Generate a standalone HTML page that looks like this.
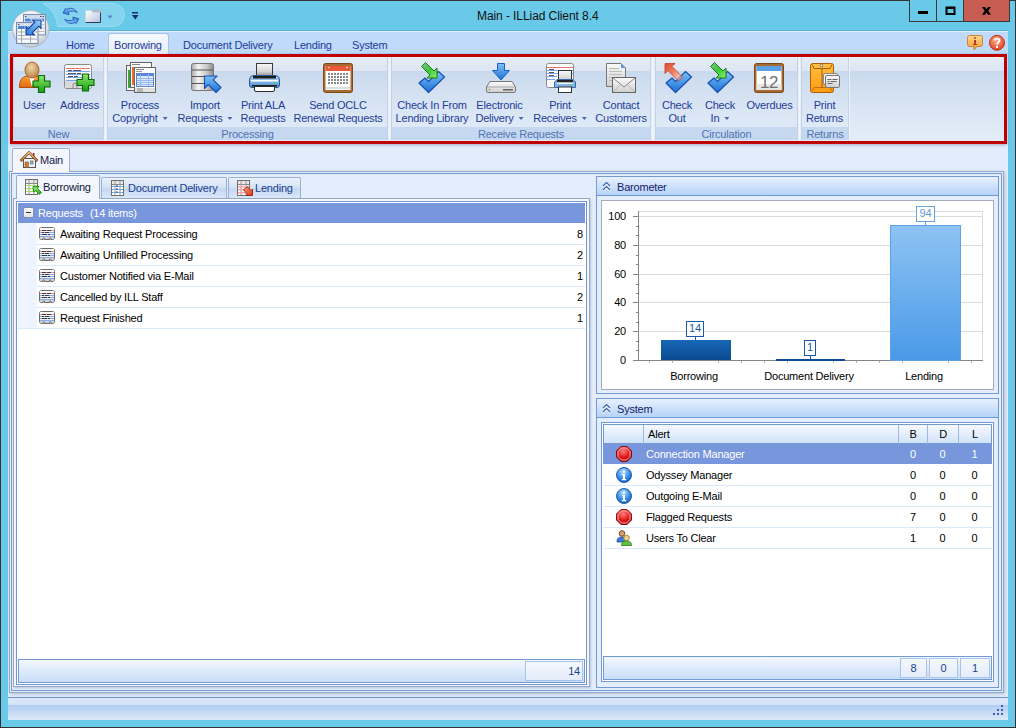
<!DOCTYPE html>
<html><head><meta charset="utf-8">
<style>
*{box-sizing:border-box;}
html,body{margin:0;padding:0;}
body{width:1016px;height:728px;position:relative;overflow:hidden;background:#69c9e8;font-family:"Liberation Sans",sans-serif;font-size:11px;letter-spacing:-0.2px;}
.a{position:absolute;}
.win{left:0;top:0;width:1016px;height:728px;border:1px solid #333;}
/* title bar */
.title{left:477px;top:8px;font-size:12px;letter-spacing:-0.08px;color:#111;line-height:16px;}
.wbtn{top:0;height:22px;border:1px solid #3a3a3a;border-top:none;}
/* ribbon */
.frame{left:8px;top:31px;width:1000px;height:689px;background:#e2ecfa;}
.tabbar{left:8px;top:31px;width:1000px;height:23px;background:#bfdafa;border-top:1px solid #e4f0fd;}
.rtab{top:39px;color:#1e3c98;line-height:13px;}
.ribbon{left:10px;top:54px;width:997px;height:90px;border:3px solid #c00000;box-shadow:0 1px 3px rgba(40,60,100,0.35);background:linear-gradient(#e6edf7 0,#dce5f1 14px,#c9d9ed 14px,#d5e2f2 40px,#e3edf9 83px);}
.grp{top:0;height:83px;border-right:1px solid #c3d2e6;border-left:1px solid #c3d2e6;}
.glab{position:absolute;left:0;right:0;bottom:0;height:13px;background:#c6d8ef;color:#4e74b6;text-align:center;line-height:15px;}
.btn{top:99px;color:#1e3c98;line-height:13px;text-align:center;white-space:nowrap;}
.ico{width:32px;height:32px;top:62px;}
.vals{line-height:13px;color:#000;width:92px;}
.vals b{font-weight:normal;display:inline-block;text-align:center;}
.vals b:nth-child(1){width:28px;}.vals b:nth-child(2){width:31px;}.vals b:nth-child(3){width:33px;}
.dd{display:inline-block;width:5px;height:3px;margin-left:5px;vertical-align:2px;background:#4a6aa8;clip-path:polygon(0 0,100% 0,50% 100%);}
</style></head><body>
<div class="a win"></div>

<!-- title bar elements -->
<div class="a title">Main - ILLiad Client 8.4</div>
<div class="a wbtn" style="left:909px;width:28px;background:#69c9e8;"></div>
<div class="a wbtn" style="left:936px;width:28px;background:#69c9e8;"></div>
<div class="a wbtn" style="left:963px;width:47px;background:#c75c52;"></div>

<!-- frame -->
<div class="a frame"></div>
<div class="a tabbar"></div>
<div class="a" style="left:8px;top:30px;width:1000px;height:1px;background:#5cb2d4;"></div>
<div class="a" style="left:8px;top:53px;width:1000px;height:1px;background:#b0d2f8;"></div>
<div class="a" style="left:108px;top:33px;width:61px;height:22px;border:1px solid #a9c4e8;border-bottom:none;border-radius:3px 3px 0 0;background:linear-gradient(#f6f9fe,#e6eef9);"></div>
<div class="a rtab" style="left:66px;">Home</div>
<div class="a rtab" style="left:114px;">Borrowing</div>
<div class="a rtab" style="left:183px;">Document Delivery</div>
<div class="a rtab" style="left:294px;">Lending</div>
<div class="a rtab" style="left:352px;">System</div>

<!-- title icons -->
<svg class="a" style="left:0;top:0;" width="1016" height="56">
<defs>
  <radialGradient id="gOrb" cx="0.45" cy="0.35" r="0.7"><stop offset="0" stop-color="#ffffff"/><stop offset="0.6" stop-color="#eceff3"/><stop offset="0.9" stop-color="#c4ccd6"/><stop offset="1" stop-color="#9aa6b4"/></radialGradient>
  <linearGradient id="gArr" x1="0" y1="1" x2="1" y2="0"><stop offset="0" stop-color="#2a7ad8"/><stop offset="1" stop-color="#9ccff8"/></linearGradient>
  <linearGradient id="gFold" x1="0" y1="0" x2="1" y2="1"><stop offset="0" stop-color="#ffffff"/><stop offset="1" stop-color="#b9c4dc"/></linearGradient>
  <radialGradient id="gHelp" cx="0.45" cy="0.35" r="0.65"><stop offset="0" stop-color="#ffb090"/><stop offset="1" stop-color="#e0401c"/></radialGradient>
  <linearGradient id="gInfo" x1="0" y1="0" x2="0" y2="1"><stop offset="0" stop-color="#ffd890"/><stop offset="1" stop-color="#f2992a"/></linearGradient>
</defs>
<!-- QAT pill -->
<path d="M43,3.5 L113,3.5 A11.5,11.5 0 0 1 113,26.5 L57.5,26.5 A27,27 0 0 0 43,3.5 Z" fill="#84d3ef" stroke="#9adcf3" stroke-width="1"/>
<!-- refresh -->
<g fill="url(#gArr)" stroke="#1a4fb0" stroke-width="0.8" stroke-linejoin="round">
  <path id="rfa" d="M63,13 L65.7,8.2 L66.8,9.4 C70,7.3 74.5,8 77.2,12.5 C74.5,10.8 71,10.6 68.3,12.3 L69,14.7 Z"/>
  <use href="#rfa" transform="rotate(180 70.9 15.9)"/>
</g>
<!-- folder -->
<defs><linearGradient id="gFold2" x1="0" y1="0" x2="1" y2="1"><stop offset="0" stop-color="#ffffff"/><stop offset="1" stop-color="#b4c0dc"/></linearGradient></defs>
<rect x="92.5" y="9.5" width="8" height="3" fill="#b4b8c0"/>
<path d="M85.5,10.5 L92,10.5 L92,12.5 L100.5,12.5 L100.5,22.5 L85.5,22.5 Z" fill="url(#gFold2)"/>
<path d="M100.5,12.5 L100.5,22.5 L85.5,22.5" fill="none" stroke="#2c3a5c" stroke-width="1"/>
<path d="M85.5,22.5 L85.5,10.5 L92,10.5" fill="none" stroke="#c8d0e0" stroke-width="0.8"/>
<path d="M107.5,15.5 L112.5,15.5 L110,18.5 Z" fill="#5a7cb8"/>
<rect x="132" y="12" width="6" height="1.5" fill="#1a2a6a"/>
<path d="M132,15 L138.5,15 L135.25,19.5 Z" fill="#1a2a6a"/>
<!-- orb -->
<circle cx="30.8" cy="28.9" r="18.3" fill="url(#gOrb)" stroke="#a6b2bf" stroke-width="0.8"/>
<g>
  <rect x="23.5" y="14.5" width="22" height="20.5" fill="#dfe6f0" stroke="#7c8ca4"/>
  <rect x="24" y="15" width="21" height="3" fill="#d0dcf0"/>
  <g fill="#333"><rect x="25" y="16" width="1.5" height="0.8"/><rect x="40" y="16" width="1.5" height="0.8"/><rect x="42.5" y="16" width="1.5" height="0.8"/></g>
  <rect x="25" y="18.5" width="19" height="15" fill="#f6f7f9"/>
  <rect x="25" y="18.5" width="19" height="3" fill="#4a86d8"/>
  <g fill="#a8adb4"><rect x="25" y="24" width="19" height="0.8"/><rect x="25" y="27.5" width="19" height="0.8"/><rect x="25" y="31" width="19" height="0.8"/><rect x="28" y="21" width="0.8" height="13"/><rect x="36" y="21" width="0.8" height="13"/></g>
  <rect x="16.5" y="22.5" width="21.5" height="21" fill="#dfe6f0" stroke="#7c8ca4"/>
  <rect x="17" y="23" width="20.5" height="2.5" fill="#d0dcf0"/>
  <rect x="18" y="24" width="1.5" height="0.8" fill="#333"/>
  <rect x="18" y="26" width="19" height="16.5" fill="#f8f9fb"/>
  <rect x="18" y="26" width="19" height="3" fill="#4a86d8"/>
  <g fill="#a3a8b0"><rect x="18" y="31.5" width="19" height="1"/><rect x="18" y="35" width="19" height="1"/><rect x="18" y="38.5" width="19" height="1"/><rect x="21" y="29" width="1" height="13.5"/><rect x="30" y="36" width="1" height="6.5"/></g>
  <path d="M26,35 L26,26.5 L28.25,28.75 L34.75,22.25 L32.5,20 L41,20 L41,28.5 L38.75,26.25 L32.25,32.75 L34.5,35 Z" fill="url(#gArr)" stroke="#fff" stroke-width="2.4" stroke-linejoin="miter"/>
  <path d="M26,35 L26,26.5 L28.25,28.75 L34.75,22.25 L32.5,20 L41,20 L41,28.5 L38.75,26.25 L32.25,32.75 L34.5,35 Z" fill="url(#gArr)" stroke="#0a3aa0" stroke-width="1.1" stroke-linejoin="miter"/>
</g>
<!-- window buttons glyphs -->
<rect x="918" y="11" width="10" height="3" fill="#000"/>
<rect x="946" y="7" width="10" height="8" fill="none" stroke="#000" stroke-width="0"/>
<path d="M945.5,6.5 h10 v8.5 h-10 Z M947.5,9 v4 h6 v-4 Z" fill="#000" fill-rule="evenodd"/>
<path d="M982,7 L985,7 L986.5,9.2 L988,7 L991,7 L988.3,10.8 L991,14.8 L988,14.8 L986.5,12.5 L985,14.8 L982,14.8 L984.7,10.8 Z" fill="#000"/>
<!-- info -->
<path d="M969.5,35.5 L980.5,35.5 Q982.5,35.5 982.5,37.5 L982.5,44.5 Q982.5,46.5 980.5,46.5 L977,46.5 L974,50 L974,46.5 L969.5,46.5 Q967.5,46.5 967.5,44.5 L967.5,37.5 Q967.5,35.5 969.5,35.5 Z" fill="url(#gInfo)" stroke="#d07a20" stroke-width="0.9"/>
<circle cx="975" cy="38" r="1" fill="#b0401a"/>
<rect x="974" y="40" width="2" height="5" fill="#b0401a"/><rect x="973" y="44" width="4" height="1" fill="#b0401a"/>
<!-- help -->
<circle cx="997" cy="42.8" r="7.5" fill="url(#gHelp)" stroke="#b02a10" stroke-width="0.9"/>
<path d="M994.5,40.5 C994.5,38 999.5,38 999.5,40.5 C999.5,42.5 997,42.5 997,44.8" fill="none" stroke="#fff" stroke-width="1.7"/>
<rect x="996" y="46" width="2" height="2" fill="#fff"/>
</svg>

<!-- ribbon -->
<div class="a ribbon">
  <div class="a grp" style="left:0;width:91px;"><div class="glab">New</div></div>
  <div class="a grp" style="left:94px;width:281px;"><div class="glab">Processing</div></div>
  <div class="a grp" style="left:378px;width:260px;"><div class="glab">Receive Requests</div></div>
  <div class="a grp" style="left:642px;width:143px;"><div class="glab">Circulation</div></div>
  <div class="a grp" style="left:788px;width:48px;"><div class="glab">Returns</div></div>
  <div class="a" style="left:91px;top:0;width:3px;height:83px;background:linear-gradient(90deg,#e2ebf7,#f2f6fc,#e2ebf7);"></div>
  <div class="a" style="left:375px;top:0;width:3px;height:83px;background:linear-gradient(90deg,#e2ebf7,#f2f6fc,#e2ebf7);"></div>
  <div class="a" style="left:638px;top:0;width:4px;height:83px;background:linear-gradient(90deg,#e2ebf7,#f2f6fc,#e2ebf7);"></div>
  <div class="a" style="left:785px;top:0;width:3px;height:83px;background:linear-gradient(90deg,#e2ebf7,#f2f6fc,#e2ebf7);"></div>
  <div class="a" style="left:836px;top:0;width:1px;height:83px;background:#eef3fa;"></div>
</div>

<div class="a btn" style="left:23px;">User</div>
<div class="a btn" style="left:60px;">Address</div>
<div class="a btn" style="left:111px;width:58px;">Process<br>Copyright<span class="dd"></span></div>
<div class="a btn" style="left:177px;width:56px;">Import<br>Requests<span class="dd"></span></div>
<div class="a btn" style="left:240px;width:46px;">Print ALA<br>Requests</div>
<div class="a btn" style="left:292px;width:92px;">Send OCLC<br>Renewal Requests</div>
<div class="a btn" style="left:394px;width:76px;">Check In From<br>Lending Library</div>
<div class="a btn" style="left:474px;width:51px;">Electronic<br>Delivery<span class="dd"></span></div>
<div class="a btn" style="left:532px;width:56px;">Print<br>Receives<span class="dd"></span></div>
<div class="a btn" style="left:594px;width:54px;">Contact<br>Customers</div>
<div class="a btn" style="left:661px;width:32px;">Check<br>Out</div>
<div class="a btn" style="left:704px;width:32px;">Check<br>In<span class="dd"></span></div>
<div class="a btn" style="left:745px;width:49px;">Overdues</div>
<div class="a btn" style="left:804px;width:41px;">Print<br>Returns</div>

<!-- ribbon icons -->
<svg class="a" style="left:0;top:0;" width="1016" height="100">
<defs>
  <linearGradient id="gGreen" x1="0" y1="0" x2="0" y2="1"><stop offset="0" stop-color="#8fe86a"/><stop offset="1" stop-color="#17a00f"/></linearGradient>
  <linearGradient id="gOrange" x1="0" y1="0" x2="0" y2="1"><stop offset="0" stop-color="#ff9d3a"/><stop offset="1" stop-color="#e06a10"/></linearGradient>
  <radialGradient id="gHead" cx="0.45" cy="0.35" r="0.6"><stop offset="0" stop-color="#f0d8a8"/><stop offset="1" stop-color="#c08850"/></radialGradient>
  <linearGradient id="gBlue" x1="0" y1="0" x2="0" y2="1"><stop offset="0" stop-color="#7ec0f8"/><stop offset="1" stop-color="#1a6fd6"/></linearGradient>
  <linearGradient id="gSteel" x1="0" y1="0" x2="1" y2="0"><stop offset="0" stop-color="#a8a8a8"/><stop offset="0.3" stop-color="#f4f4f4"/><stop offset="0.7" stop-color="#c8c8c8"/><stop offset="1" stop-color="#8a8a8a"/></linearGradient>
  <linearGradient id="gGray" x1="0" y1="0" x2="0" y2="1"><stop offset="0" stop-color="#fafafa"/><stop offset="1" stop-color="#cfcfcf"/></linearGradient>
  <linearGradient id="gEnv" x1="0" y1="0" x2="0" y2="1"><stop offset="0" stop-color="#ffc040"/><stop offset="1" stop-color="#ff9a10"/></linearGradient>
  <linearGradient id="gRedA" x1="1" y1="1" x2="0" y2="0"><stop offset="0" stop-color="#ffd0c0" stop-opacity="0.3"/><stop offset="0.5" stop-color="#f48060"/><stop offset="1" stop-color="#e04a30"/></linearGradient>
  <linearGradient id="gGreenA" x1="0" y1="0" x2="1" y2="1"><stop offset="0" stop-color="#1b9b1b" stop-opacity="0.4"/><stop offset="0.5" stop-color="#3cc83c"/><stop offset="1" stop-color="#8ef060"/></linearGradient>
  <g id="plus"><path d="M-3,-8.5h6v5.5h5.5v6h-5.5v5.5h-6v-5.5h-5.5v-6h5.5z" fill="url(#gGreen)" stroke="#0a6a0a" stroke-width="1.2" stroke-linejoin="round"/></g>
  <g id="check"><path d="M0,6 L9.5,15.5 L25.5,0 L25.5,0 L19.5,-5.5 L9.5,4.5 L6,1 Z" fill="url(#gBlue)" stroke="#1450b0" stroke-width="1.2" stroke-linejoin="round"/></g>
</defs>
<!-- User -->
<g>
  <path d="M19.5,87.5 C19.5,80 22,77 27,76 L37,76 C40,77 42,80 42,87.5 Z" fill="url(#gOrange)" stroke="#b04e08" stroke-width="1"/>
  <path d="M29,76 L32,87 L35,76 Z" fill="#fff"/>
  <ellipse cx="32" cy="70" rx="7" ry="8" fill="url(#gHead)" stroke="#a86a38" stroke-width="1"/>
  <use href="#plus" x="41.5" y="84"/>
</g>
<!-- Address -->
<g>
  <rect x="64.5" y="64.5" width="27" height="24" rx="2" fill="#fcfcfc" stroke="#8a8a8a"/>
  <rect x="65" y="81" width="26" height="7" fill="#d8d8d8"/>
  <path d="M73,88 v-3 a2,2 0 0 1 4,0 v3" fill="none" stroke="#8a8a8a"/>
  <rect x="66" y="68" width="24" height="1" fill="#f07070"/>
  <rect x="66" y="71" width="24" height="1" fill="#7aa6f0"/>
  <rect x="66" y="74" width="24" height="1" fill="#7aa6f0"/>
  <rect x="66" y="77" width="24" height="1" fill="#7aa6f0"/>
  <rect x="66" y="80" width="14" height="1" fill="#7aa6f0"/>
  <g fill="#555"><rect x="68" y="70" width="4" height="1"/><rect x="73" y="70" width="8" height="1"/><rect x="68" y="73" width="8" height="1"/><rect x="77" y="73" width="4" height="1"/><rect x="68" y="76" width="5" height="1"/><rect x="74" y="76" width="4" height="1"/></g>
  <use href="#plus" x="85.5" y="82.5"/>
</g>
<!-- Process Copyright -->
<g>
  <rect x="126.5" y="65.5" width="12" height="25" fill="#f4f4f4" stroke="#666"/>
  <rect x="128" y="70" width="2" height="18" fill="#40a040"/>
  <rect x="130.5" y="62.5" width="21" height="25" fill="#f8f8f8" stroke="#666"/>
  <rect x="132" y="67" width="3" height="18" fill="#e87020"/>
  <rect x="132" y="64" width="8" height="1" fill="#888"/>
  <rect x="134.5" y="67.5" width="21" height="25" fill="#ffffff" stroke="#666"/>
  <rect x="136" y="69" width="8" height="1" fill="#888"/><rect x="136" y="71" width="6" height="1" fill="#999"/>
  <rect x="136.5" y="73.5" width="17" height="13" fill="#dce8fb" stroke="#5a86d8"/>
  <rect x="137" y="74" width="16" height="2" fill="#5a86d8"/>
  <g fill="#9ab8ea"><rect x="137" y="78" width="16" height="1"/><rect x="137" y="80" width="16" height="1"/><rect x="137" y="82" width="16" height="1"/><rect x="137" y="84" width="16" height="1"/><rect x="140" y="74" width="1" height="12"/><rect x="148" y="74" width="1" height="12"/></g>
  <rect x="135" y="88" width="20" height="4" fill="#e0e0e0"/>
  <rect x="137" y="88.5" width="6" height="1" fill="#888"/><rect x="137" y="90.5" width="6" height="1" fill="#888"/>
</g>
<!-- Import Requests -->
<g>
  <rect x="191.5" y="63.5" width="22" height="27" rx="2" fill="url(#gSteel)" stroke="#777"/>
  <g fill="#555"><rect x="192" y="69.5" width="21" height="1"/><rect x="192" y="76" width="21" height="1"/><rect x="192" y="83" width="21" height="1"/></g>
  <path d="M204.5,76 L217,76 L213.2,79.8 L221,87.5 L216,92.5 L208.3,84.7 L204.5,88.5 Z" fill="url(#gBlue)" stroke="#1450b0" stroke-width="1.1" stroke-linejoin="round"/>
</g>
<!-- Print ALA -->
<g>
  <defs>
    <linearGradient id="gPap" x1="0" y1="0" x2="0" y2="1"><stop offset="0" stop-color="#f8f8f8"/><stop offset="0.6" stop-color="#d8d8d8"/><stop offset="1" stop-color="#8a8a8a"/></linearGradient>
    <linearGradient id="gPb" x1="0" y1="0" x2="0" y2="1"><stop offset="0" stop-color="#b8daf8"/><stop offset="1" stop-color="#4a8ed8"/></linearGradient>
  </defs>
  <rect x="256.5" y="63.5" width="16" height="13" fill="url(#gPap)" stroke="#3a3a3a"/>
  <path d="M253,75.5 L276,75.5 Q279.5,76 279.5,80 L279.5,85 Q279.5,87.5 277,87.5 L252,87.5 Q249.5,87.5 249.5,85 L249.5,80 Q249.5,76 253,75.5 Z" fill="url(#gPb)" stroke="#2a5a9a"/>
  <rect x="253" y="76" width="23" height="2.5" fill="#1e1e1e"/>
  <rect x="251" y="80" width="27" height="1.5" fill="#ffffff"/>
  <rect x="252" y="85" width="25" height="1.5" fill="#1e1e1e"/>
  <path d="M254.5,86.5 L274.5,86.5 L274.5,90 Q274.5,91.5 273,91.5 L256,91.5 Q254.5,91.5 254.5,90 Z" fill="#fff" stroke="#2a2a2a"/>
  <circle cx="274.5" cy="83" r="0.9" fill="#40d040"/>
</g>
<!-- Send OCLC -->
<g>
  <rect x="323.5" y="63.5" width="29" height="29" rx="2" fill="#a86a30" stroke="#7a4a1a"/>
  <rect x="325.5" y="66" width="25" height="24" fill="#fff"/>
  <rect x="325.5" y="66" width="25" height="5" fill="#e95a3a"/>
  <circle cx="329" cy="67.5" r="0.8" fill="#fff"/><circle cx="347" cy="67.5" r="0.8" fill="#fff"/>
  <g fill="#8a8a8a">
    <rect x="328" y="73" width="2" height="2"/><rect x="331" y="73" width="2" height="2"/><rect x="334" y="73" width="2" height="2"/><rect x="337" y="73" width="2" height="2"/><rect x="340" y="73" width="2" height="2"/><rect x="343" y="73" width="2" height="2"/><rect x="346" y="73" width="2" height="2"/>
    <rect x="328" y="76" width="2" height="2"/><rect x="331" y="76" width="2" height="2"/><rect x="334" y="76" width="2" height="2"/><rect x="337" y="76" width="2" height="2"/><rect x="340" y="76" width="2" height="2"/><rect x="343" y="76" width="2" height="2"/><rect x="346" y="76" width="2" height="2"/>
    <rect x="328" y="79" width="2" height="2"/><rect x="331" y="79" width="2" height="2"/><rect x="334" y="79" width="2" height="2"/><rect x="337" y="79" width="2" height="2"/><rect x="340" y="79" width="2" height="2"/><rect x="343" y="79" width="2" height="2"/><rect x="346" y="79" width="2" height="2"/>
    <rect x="328" y="82" width="2" height="2"/><rect x="331" y="82" width="2" height="2"/><rect x="334" y="82" width="2" height="2"/><rect x="337" y="82" width="2" height="2"/><rect x="340" y="82" width="2" height="2"/><rect x="343" y="82" width="2" height="2"/><rect x="346" y="82" width="2" height="2"/>
  </g>
  <rect x="326" y="87" width="24" height="2" fill="#ddd"/>
</g>
<!-- Check In From -->
<g>
  <use href="#check" x="419" y="77"/>
  <path d="M437,78 L427,78 L430,75 L421.5,66.5 L425.5,62.5 L434,71 L437,68 Z" fill="url(#gGreenA)" stroke="#18801a" stroke-width="1" stroke-linejoin="round"/>
</g>
<!-- Electronic Delivery -->
<g>
  <path d="M497.5,63.5 L504.5,63.5 L504.5,70.5 L509.5,70.5 L501,80 L492.5,70.5 L497.5,70.5 Z" fill="url(#gBlue)" stroke="#1a60c0" stroke-width="1" stroke-linejoin="round"/>
  <path d="M490,81.5 L512,81.5 L515.5,87 L515.5,91 Q515.5,92.5 514,92.5 L488,92.5 Q486.5,92.5 486.5,91 L486.5,87 Z" fill="url(#gGray)" stroke="#777"/>
  <rect x="487" y="86.5" width="28" height="1" fill="#aaa"/>
  <circle cx="489.5" cy="89.5" r="0.8" fill="#40c040"/>
  <rect x="503" y="89" width="10" height="1.5" fill="#666"/>
</g>
<!-- Print Receives -->
<g>
  <rect x="546.5" y="63.5" width="27" height="24" rx="2" fill="#fcfcfc" stroke="#8a8a8a"/>
  <rect x="547" y="67" width="26" height="1" fill="#f07070"/>
  <g fill="#7aa6f0"><rect x="547" y="70" width="26" height="1"/><rect x="547" y="73" width="26" height="1"/><rect x="547" y="76" width="10" height="1"/><rect x="547" y="79" width="8" height="1"/></g>
  <g fill="#555"><rect x="549" y="69" width="5" height="1"/><rect x="549" y="72" width="5" height="1"/><rect x="549" y="75" width="5" height="1"/></g>
  <rect x="558.5" y="70.5" width="13" height="9" fill="url(#gGray)" stroke="#333"/>
  <path d="M557,79.5 L573,79.5 L575.5,82 L575.5,87.5 L554.5,87.5 L554.5,82 Z" fill="#7fb4ea" stroke="#3a6aaa"/>
  <rect x="557" y="80" width="16" height="2.5" fill="#222"/>
  <rect x="557" y="82.5" width="16" height="1.5" fill="#fff"/>
  <rect x="558.5" y="87" width="13" height="5.5" fill="#fff" stroke="#333"/>
  <circle cx="572" cy="85" r="0.8" fill="#40d040"/>
</g>
<!-- Contact Customers -->
<g>
  <path d="M606.5,63.5 L621,63.5 L625.5,68 L625.5,86.5 L606.5,86.5 Z" fill="url(#gGray)" stroke="#777"/>
  <path d="M621,63.5 L625.5,68 L621,68 Z" fill="#5a9ae8"/>
  <g fill="#bbb"><rect x="609" y="68" width="10" height="1"/><rect x="609" y="71" width="13" height="1"/><rect x="609" y="74" width="13" height="1"/><rect x="609" y="77" width="4" height="1"/><rect x="609" y="80" width="4" height="1"/></g>
  <rect x="612.5" y="77.5" width="23" height="15" fill="url(#gGray)" stroke="#666"/>
  <path d="M613,78 L624,87 L635,78" fill="none" stroke="#888"/>
  <path d="M613,92 L620,85 M635,92 L628,85" fill="none" stroke="#bbb"/>
</g>
<!-- Check Out -->
<g>
  <use href="#check" x="666" y="77"/>
  <path d="M665,63.5 L675,63.5 L672,66.5 L682.5,77 L678.5,81 L668,70.5 L665,73.5 Z" fill="url(#gRedA)" stroke="#c84a30" stroke-width="0.9" stroke-linejoin="round"/>
</g>
<!-- Check In -->
<g>
  <use href="#check" x="708" y="77"/>
  <path d="M726,78 L716,78 L719,75 L710.5,66.5 L714.5,62.5 L723,71 L726,68 Z" fill="url(#gGreenA)" stroke="#18801a" stroke-width="1" stroke-linejoin="round"/>
</g>
<!-- Overdues -->
<g>
  <rect x="754.5" y="63.5" width="29" height="29" rx="2" fill="#a86a30" stroke="#7a4a1a"/>
  <rect x="756.5" y="66" width="25" height="24" fill="#fff"/>
  <rect x="756.5" y="66" width="25" height="5" fill="#5aa0e8"/>
  <rect x="756.5" y="84" width="25" height="6" fill="#e6e6e6"/>
  <text x="769" y="88" text-anchor="middle" font-family="Liberation Sans" font-size="17" fill="#707070" letter-spacing="-0.5">12</text>
</g>
<!-- Print Returns -->
<g>
  <rect x="810.5" y="63.5" width="23" height="29" rx="2" fill="url(#gEnv)" stroke="#b0600a"/>
  <path d="M812,64.5 L814,68.5 L830,68.5 L832,64.5" fill="none" stroke="#a05a10"/>
  <path d="M812,91 L814,87.5 L830,87.5 L832,91" fill="none" stroke="#c87010"/>
  <rect x="821.5" y="68" width="1" height="20" fill="#a05a10"/>
  <circle cx="821.5" cy="65.5" r="1.3" fill="#fff" stroke="#333" stroke-width="0.6"/>
  <rect x="823.5" y="73.5" width="14" height="11" rx="1.5" fill="#f4f4f4" stroke="#888"/>
  <rect x="825.5" y="75.5" width="14" height="12" rx="1.5" fill="url(#gGray)" stroke="#777"/>
  <g fill="#666"><rect x="827.5" y="79" width="4" height="1"/><rect x="832.5" y="79" width="5" height="1"/><rect x="827.5" y="81" width="2" height="1"/><rect x="830.5" y="81" width="6" height="1"/><rect x="827.5" y="83" width="5" height="1"/></g>
</g>
</svg>

<!-- main doc tab -->
<div class="a" style="left:9px;top:171px;width:995px;height:522px;border:1px solid #94a7c6;box-shadow:1px 1px 3px rgba(60,80,120,0.3);"></div>
<div class="a" style="left:12px;top:148px;width:58px;height:24px;border:1px solid #9db2d3;border-bottom:none;border-radius:2px 2px 0 0;background:#f3f7fd;"></div>
<div class="a" style="left:40px;top:154px;color:#15204a;font-size:11px;line-height:13px;">Main</div>
<div class="a" style="left:11px;top:173px;width:991px;height:518px;border:1px solid #739ad3;background:#e3edfb;"></div>

<!-- left tab control -->
<div class="a" style="left:13px;top:198px;width:577px;height:489px;border:1px solid #94a7c6;box-shadow:1px 1px 2px rgba(60,80,120,0.25);background:#f3f7fd;"></div>
<div class="a" style="left:16px;top:175px;width:84px;height:24px;border:1px solid #98acc9;border-bottom:none;border-radius:2px 2px 0 0;background:#f3f7fd;"></div>
<div class="a" style="left:101px;top:177px;width:126px;height:21px;border:1px solid #97b0d4;border-bottom:none;border-radius:2px 2px 0 0;background:linear-gradient(#eaf1fb,#d6e4f6 45%,#c5d8f2 55%,#dae7f8);"></div>
<div class="a" style="left:228px;top:177px;width:73px;height:21px;border:1px solid #97b0d4;border-bottom:none;border-radius:2px 2px 0 0;background:linear-gradient(#eaf1fb,#d6e4f6 45%,#c5d8f2 55%,#dae7f8);"></div>
<div class="a" style="left:43px;top:181px;color:#10183a;line-height:13px;">Borrowing</div>
<div class="a" style="left:128px;top:182px;color:#20408f;line-height:13px;">Document Delivery</div>
<div class="a" style="left:255px;top:182px;color:#20408f;line-height:13px;">Lending</div>

<!-- left grid -->
<div class="a" style="left:16px;top:201px;width:571px;height:484px;border:1px solid #6f98d3;background:#fff;"></div>
<div class="a" style="left:18px;top:203px;width:567px;height:20px;background:#7896dc;"></div>
<div class="a" style="left:23px;top:207px;width:11px;height:11px;border:1px solid #8090a8;border-radius:2px;background:linear-gradient(#ffffff,#dfe5ee);"></div>
<div class="a" style="left:26px;top:212px;width:5px;height:1px;background:#333;"></div>
<div class="a" style="left:38px;top:207px;color:#fff;line-height:13px;">Requests<span style="margin-left:7px">(14 items)</span></div>
<div class="a" style="left:18px;top:223px;width:19px;height:105px;background:#edf4fe;"></div>
<div class="a" style="left:37px;top:244px;width:548px;height:1px;background:#d9e8fb;"></div>
<div class="a" style="left:37px;top:265px;width:548px;height:1px;background:#d9e8fb;"></div>
<div class="a" style="left:37px;top:286px;width:548px;height:1px;background:#d9e8fb;"></div>
<div class="a" style="left:37px;top:307px;width:548px;height:1px;background:#d9e8fb;"></div>
<div class="a" style="left:18px;top:328px;width:567px;height:1px;background:#d9e8fb;"></div>
<div class="a" style="left:60px;top:228px;color:#000;line-height:13px;">Awaiting Request Processing</div>
<div class="a" style="left:60px;top:249px;color:#000;line-height:13px;">Awaiting Unfilled Processing</div>
<div class="a" style="left:60px;top:270px;color:#000;line-height:13px;">Customer Notified via E-Mail</div>
<div class="a" style="left:60px;top:291px;color:#000;line-height:13px;">Cancelled by ILL Staff</div>
<div class="a" style="left:60px;top:312px;color:#000;line-height:13px;">Request Finished</div>
<div class="a" style="left:540px;top:228px;width:43px;text-align:right;color:#000;line-height:13px;">8</div>
<div class="a" style="left:540px;top:249px;width:43px;text-align:right;color:#000;line-height:13px;">2</div>
<div class="a" style="left:540px;top:270px;width:43px;text-align:right;color:#000;line-height:13px;">1</div>
<div class="a" style="left:540px;top:291px;width:43px;text-align:right;color:#000;line-height:13px;">2</div>
<div class="a" style="left:540px;top:312px;width:43px;text-align:right;color:#000;line-height:13px;">1</div>
<div class="a" style="left:18px;top:659px;width:567px;height:24px;border:1px solid #739ad3;background:linear-gradient(#f3f7fe,#c9ddf8);"></div>
<div class="a" style="left:525px;top:661px;width:58px;height:20px;border:1px solid #a9c3ea;background:linear-gradient(#f5f9fe,#e3ecfa);"></div>
<div class="a" style="left:540px;top:665px;width:40px;text-align:right;color:#1f3f8f;line-height:13px;">14</div>

<!-- barometer panel -->
<div class="a" style="left:596px;top:176px;width:403px;height:218px;border:1px solid #739ad3;background:#e3edfb;"></div>
<div class="a" style="left:597px;top:177px;width:401px;height:19px;background:linear-gradient(#e8f1fd,#b4d3fa);border-bottom:1px solid #739ad3;"></div>
<div class="a" style="left:617px;top:181px;color:#15206a;line-height:13px;">Barometer</div>
<div class="a" style="left:601px;top:200px;width:393px;height:190px;border:1px solid #a3acb8;background:#fff;"></div>
<svg class="a" style="left:0;top:0;" width="1016" height="400" shape-rendering="crispEdges">
  <defs>
    <linearGradient id="gb" x1="0" y1="0" x2="0" y2="1"><stop offset="0" stop-color="#1767b8"/><stop offset="1" stop-color="#0a4990"/></linearGradient>
    <linearGradient id="gl" x1="0" y1="0" x2="0" y2="1"><stop offset="0" stop-color="#8ec3f3"/><stop offset="1" stop-color="#4a9ae8"/></linearGradient>
  </defs>
  <g fill="#dcdcdc">
    <rect x="639" y="211" width="344" height="1"/>
    <rect x="982" y="211" width="1" height="149"/>
    <rect x="639" y="216" width="343" height="1"/>
    <rect x="639" y="245" width="343" height="1"/>
    <rect x="639" y="274" width="343" height="1"/>
    <rect x="639" y="302" width="343" height="1"/>
    <rect x="639" y="331" width="343" height="1"/>
  </g>
  <g fill="#858585">
    <rect x="638" y="211" width="1" height="150"/>
    <rect x="633" y="360" width="350" height="1"/>
    <rect x="633" y="216" width="5" height="1"/>
    <rect x="633" y="245" width="5" height="1"/>
    <rect x="633" y="274" width="5" height="1"/>
    <rect x="633" y="302" width="5" height="1"/>
    <rect x="633" y="331" width="5" height="1"/>
    <rect x="636" y="226" width="2" height="1"/><rect x="636" y="235" width="2" height="1"/>
    <rect x="636" y="255" width="2" height="1"/><rect x="636" y="264" width="2" height="1"/>
    <rect x="636" y="284" width="2" height="1"/><rect x="636" y="293" width="2" height="1"/>
    <rect x="636" y="312" width="2" height="1"/><rect x="636" y="322" width="2" height="1"/>
    <rect x="636" y="341" width="2" height="1"/><rect x="636" y="350" width="2" height="1"/>
  </g>
  <g fill="#b0b0b0">
    <rect x="649" y="361" width="1" height="2"/><rect x="672" y="361" width="1" height="2"/>
    <rect x="718" y="361" width="1" height="2"/><rect x="741" y="361" width="1" height="2"/>
    <rect x="764" y="361" width="1" height="2"/><rect x="787" y="361" width="1" height="2"/>
    <rect x="833" y="361" width="1" height="2"/><rect x="856" y="361" width="1" height="2"/>
    <rect x="879" y="361" width="1" height="2"/><rect x="902" y="361" width="1" height="2"/>
    <rect x="948" y="361" width="1" height="2"/><rect x="971" y="361" width="1" height="2"/>
  </g>
  <rect x="661" y="340" width="70" height="20" fill="url(#gb)"/>
  <rect x="776" y="359" width="69" height="2" fill="#0b4c95"/>
  <rect x="890" y="225" width="70" height="135" fill="url(#gl)" stroke="#5fa2e6" stroke-width="1"/>
  <g fill="#fff" stroke="#1a5aa8">
    <rect x="686.5" y="321.5" width="17" height="15"/>
    <rect x="804.5" y="340.5" width="11" height="15"/>
  </g>
  <rect x="916.5" y="206.5" width="18" height="15" fill="#fff" stroke="#6aa5e2"/>
  <rect x="695" y="337" width="1" height="3" fill="#1a5aa8"/>
  <rect x="810" y="356" width="1" height="3" fill="#1a5aa8"/>
  <rect x="925" y="222" width="1" height="3" fill="#6aa5e2"/>
</svg>
<div class="a" style="left:600px;top:210px;width:26px;text-align:right;color:#000;line-height:13px;">100</div>
<div class="a" style="left:600px;top:239px;width:26px;text-align:right;color:#000;line-height:13px;">80</div>
<div class="a" style="left:600px;top:268px;width:26px;text-align:right;color:#000;line-height:13px;">60</div>
<div class="a" style="left:600px;top:296px;width:26px;text-align:right;color:#000;line-height:13px;">40</div>
<div class="a" style="left:600px;top:325px;width:26px;text-align:right;color:#000;line-height:13px;">20</div>
<div class="a" style="left:600px;top:354px;width:26px;text-align:right;color:#000;line-height:13px;">0</div>
<div class="a" style="left:686px;top:322px;width:18px;text-align:center;color:#1a5aa8;line-height:13px;">14</div>
<div class="a" style="left:804px;top:341px;width:12px;text-align:center;color:#1a5aa8;line-height:13px;">1</div>
<div class="a" style="left:916px;top:207px;width:19px;text-align:center;color:#5f97d6;line-height:13px;">94</div>
<div class="a" style="left:644px;top:370px;width:100px;text-align:center;color:#000;line-height:13px;">Borrowing</div>
<div class="a" style="left:759px;top:370px;width:100px;text-align:center;color:#000;line-height:13px;">Document Delivery</div>
<div class="a" style="left:874px;top:370px;width:100px;text-align:center;color:#000;line-height:13px;">Lending</div>

<!-- system panel -->
<div class="a" style="left:596px;top:398px;width:403px;height:290px;border:1px solid #739ad3;background:#e3edfb;"></div>
<div class="a" style="left:597px;top:399px;width:401px;height:19px;background:linear-gradient(#e8f1fd,#b4d3fa);border-bottom:1px solid #739ad3;"></div>
<div class="a" style="left:617px;top:403px;color:#15206a;line-height:13px;">System</div>
<div class="a" style="left:601px;top:422px;width:393px;height:260px;border:1px solid #739ad3;background:#fff;"></div>
<div class="a" style="left:603px;top:424px;width:389px;height:20px;background:linear-gradient(#f6f9fe,#d0e2fa);border:1px solid #739ad3;"></div>
<div class="a" style="left:603px;top:444px;width:389px;height:20px;background:#7896dc;"></div>
<div class="a" style="left:603px;top:656px;width:389px;height:24px;border:1px solid #739ad3;background:linear-gradient(#f3f7fe,#c9ddf8);"></div>
<div class="a" style="left:643px;top:425px;width:1px;height:19px;background:#9cb9e0;"></div>
<div class="a" style="left:898px;top:425px;width:1px;height:19px;background:#9cb9e0;"></div>
<div class="a" style="left:927px;top:425px;width:1px;height:19px;background:#9cb9e0;"></div>
<div class="a" style="left:958px;top:425px;width:1px;height:19px;background:#9cb9e0;"></div>
<div class="a" style="left:648px;top:428px;color:#000;line-height:13px;">Alert</div>
<div class="a" style="left:899px;top:428px;width:28px;text-align:center;color:#000;line-height:13px;">B</div>
<div class="a" style="left:928px;top:428px;width:30px;text-align:center;color:#000;line-height:13px;">D</div>
<div class="a" style="left:959px;top:428px;width:32px;text-align:center;color:#000;line-height:13px;">L</div>
<div class="a" style="left:603px;top:485px;width:389px;height:1px;background:#d9e8fb;"></div>
<div class="a" style="left:603px;top:506px;width:389px;height:1px;background:#d9e8fb;"></div>
<div class="a" style="left:603px;top:527px;width:389px;height:1px;background:#d9e8fb;"></div>
<div class="a" style="left:603px;top:548px;width:389px;height:1px;background:#d9e8fb;"></div>
<div class="a" style="left:646px;top:448px;color:#fff;line-height:13px;">Connection Manager</div>
<div class="a" style="left:646px;top:469px;color:#000;line-height:13px;">Odyssey Manager</div>
<div class="a" style="left:646px;top:490px;color:#000;line-height:13px;">Outgoing E-Mail</div>
<div class="a" style="left:646px;top:511px;color:#000;line-height:13px;">Flagged Requests</div>
<div class="a" style="left:646px;top:532px;color:#000;line-height:13px;">Users To Clear</div>
<div class="a vals" style="left:899px;top:448px;color:#fff;"><b>0</b><b>0</b><b>1</b></div>
<div class="a vals" style="left:899px;top:469px;"><b>0</b><b>0</b><b>0</b></div>
<div class="a vals" style="left:899px;top:490px;"><b>0</b><b>0</b><b>0</b></div>
<div class="a vals" style="left:899px;top:511px;"><b>7</b><b>0</b><b>0</b></div>
<div class="a vals" style="left:899px;top:532px;"><b>1</b><b>0</b><b>0</b></div>
<div class="a" style="left:900px;top:658px;width:27px;height:20px;border:1px solid #a9c3ea;background:linear-gradient(#f5f9fe,#e3ecfa);text-align:center;line-height:18px;color:#1f3f8f;">8</div>
<div class="a" style="left:929px;top:658px;width:29px;height:20px;border:1px solid #a9c3ea;background:linear-gradient(#f5f9fe,#e3ecfa);text-align:center;line-height:18px;color:#1f3f8f;">0</div>
<div class="a" style="left:960px;top:658px;width:30px;height:20px;border:1px solid #a9c3ea;background:linear-gradient(#f5f9fe,#e3ecfa);text-align:center;line-height:18px;color:#1f3f8f;">1</div>

<!-- status bar -->
<div class="a" style="left:8px;top:697px;width:1000px;height:23px;border-top:1px solid #6d93cc;background:linear-gradient(#dce8f8 0,#d3e2f7 7px,#b0ccf1 7px,#c6daf4 14px,#dae7f8 22px);"></div>

<!-- misc icons -->
<svg class="a" style="left:0;top:0;" width="1016" height="728">
<defs>
  <linearGradient id="gRoof" x1="0" y1="0" x2="0" y2="1"><stop offset="0" stop-color="#f0c890"/><stop offset="1" stop-color="#b8783a"/></linearGradient>
  <radialGradient id="gStop" cx="0.45" cy="0.3" r="0.7"><stop offset="0" stop-color="#ff8080"/><stop offset="0.6" stop-color="#e01818"/><stop offset="1" stop-color="#a00000"/></radialGradient>
  <radialGradient id="gInf" cx="0.45" cy="0.3" r="0.7"><stop offset="0" stop-color="#b8e0ff"/><stop offset="0.6" stop-color="#3a90e8"/><stop offset="1" stop-color="#1860c0"/></radialGradient>
  <linearGradient id="gGA" x1="0" y1="0" x2="1" y2="1"><stop offset="0" stop-color="#a8f080"/><stop offset="1" stop-color="#20a020"/></linearGradient>
  <linearGradient id="gRA" x1="0" y1="0" x2="1" y2="1"><stop offset="0" stop-color="#ffa080"/><stop offset="1" stop-color="#d83818"/></linearGradient>
  <g id="rowico">
    <rect x="0.5" y="0.5" width="15" height="12" rx="2" fill="#e6e6e6" stroke="#6a6a6a"/>
    <rect x="1" y="1" width="14" height="2" fill="#fafafa"/>
    <rect x="1" y="3" width="14" height="1" fill="#ff8c8c"/>
    <rect x="1" y="4" width="14" height="1" fill="#f4f4f4"/>
    <rect x="1" y="5" width="14" height="1" fill="#86acf6"/>
    <rect x="1" y="6" width="14" height="1" fill="#f0f0f0"/>
    <rect x="1" y="7" width="14" height="1" fill="#86acf6"/>
    <rect x="1" y="8" width="14" height="1" fill="#ececec"/>
    <rect x="1" y="9" width="14" height="1" fill="#86acf6"/>
    <rect x="1" y="10" width="14" height="2" fill="#cfcfcf"/>
    <g fill="#3a3a3a"><rect x="3" y="3" width="4" height="1"/><rect x="8" y="3" width="4" height="1"/><rect x="3" y="5" width="2" height="1"/><rect x="6" y="5" width="4" height="1"/><rect x="3" y="7" width="5" height="1"/><rect x="9" y="7" width="2" height="1"/></g>
    <path d="M4,12.5 v-1.5 h1.5 v1.5 M10.5,12.5 v-1.5 h1.5 v1.5" fill="#fff" stroke="#6a6a6a" stroke-width="0.8"/>
  </g>
  <g id="stop"><path d="M5,0.5 L11,0.5 L15.5,5 L15.5,11 L11,15.5 L5,15.5 L0.5,11 L0.5,5 Z" fill="url(#gStop)" stroke="#8a0000" stroke-width="0.9"/><path d="M5.5,2 L10.5,2 L14,5.5 L14,10.5 L10.5,14 L5.5,14 L2,10.5 L2,5.5 Z" fill="none" stroke="#ffc8c8" stroke-width="0.9" opacity="1"/></g>
  <g id="info"><circle cx="8" cy="8" r="7.5" fill="url(#gInf)" stroke="#1a50a0" stroke-width="0.9"/><circle cx="8" cy="4.5" r="1.3" fill="#fff"/><path d="M6,7 h3 v5 h1.2 v1.3 h-4.4 v-1.3 h1.2 v-3.7 h-1 z" fill="#fff"/></g>
  <g id="chev"><path d="M0.5,5 L4,1.5 L7.5,5 M0.5,9 L4,5.5 L7.5,9" fill="none" stroke="#ffffff" stroke-width="1.3" transform="translate(0,1)"/><path d="M0.5,5 L4,1.5 L7.5,5 M0.5,9 L4,5.5 L7.5,9" fill="none" stroke="#3a62a6" stroke-width="1.1"/></g>
  <g id="grid13">
    <rect x="0.5" y="0.5" width="12" height="15" fill="#fff" stroke="#707070"/>
    <rect x="1" y="1" width="11" height="3" fill="#e8e8e8"/>
    <rect x="1" y="4" width="11" height="1" fill="#888"/>
    <rect x="3.5" y="1" width="1" height="14" fill="#999"/><rect x="8.5" y="1" width="1" height="14" fill="#999"/>
  </g>
</defs>
<!-- house -->
<g>
  <rect x="23.5" y="158.5" width="12" height="9" fill="#f2f2f2" stroke="#555"/>
  <rect x="33" y="153" width="1.5" height="5" fill="#c01818"/>
  <path d="M20.5,161 L29,152.5 L37.5,161" fill="none" stroke="#7a4a1a" stroke-width="2.6" stroke-linejoin="round"/>
  <path d="M20.5,161 L29,152.5 L37.5,161" fill="none" stroke="url(#gRoof)" stroke-width="1.4" stroke-linejoin="round"/>
  <rect x="25" y="162" width="3.5" height="5.5" fill="#c8803a" stroke="#7a4a1a" stroke-width="0.5"/>
  <rect x="30.5" y="161" width="2.5" height="3" fill="#8ac8f8" stroke="#555" stroke-width="0.6"/>
</g>
<!-- borrowing tab icon -->
<g transform="translate(25,179)">
  <use href="#grid13"/>
  <rect x="1" y="6" width="11" height="1" fill="#a0e060"/><rect x="1" y="9" width="11" height="1" fill="#a0e060"/><rect x="1" y="12" width="11" height="1" fill="#a0e060"/>
  <path d="M8,7.5 L14,7.5 L12.5,9.5 L16.5,13.5 L14.5,15.5 L10.5,11.5 L8.5,13 Z" fill="url(#gGA)" stroke="#168a16" stroke-width="0.9" stroke-linejoin="round"/>
</g>
<!-- doc delivery tab icon -->
<g transform="translate(111,180)">
  <use href="#grid13"/>
  <rect x="1" y="6" width="11" height="1" fill="#7aa8e0"/><rect x="1" y="9" width="11" height="1" fill="#7aa8e0"/><rect x="1" y="12" width="11" height="1" fill="#7aa8e0"/>
  <g fill="#2a5a9a"><rect x="5" y="5.5" width="2" height="1.2"/><rect x="5" y="8.5" width="2" height="1.2"/><rect x="5" y="11.5" width="2" height="1.2"/></g>
</g>
<!-- lending tab icon -->
<g transform="translate(237,180)">
  <use href="#grid13"/>
  <rect x="1" y="6" width="11" height="1.5" fill="#ffa0a0"/><rect x="1" y="9" width="11" height="1.5" fill="#ffa0a0"/><rect x="1" y="12" width="11" height="1.5" fill="#ffa0a0"/>
  <path d="M8.5,8 L6.5,10 L10.5,14 L9,15.5 L15.5,15.5 L15.5,9 L14,10.5 L10.5,7 Z" fill="url(#gRA)" stroke="#a01808" stroke-width="0.9" stroke-linejoin="round"/>
</g>
<!-- row icons -->
<use href="#rowico" x="39" y="227"/>
<use href="#rowico" x="39" y="248"/>
<use href="#rowico" x="39" y="269"/>
<use href="#rowico" x="39" y="290"/>
<use href="#rowico" x="39" y="311"/>
<!-- system icons -->
<use href="#stop" x="616" y="446"/>
<use href="#info" x="616" y="467"/>
<use href="#info" x="616" y="488"/>
<use href="#stop" x="616" y="509"/>
<g transform="translate(616,530)">
  <circle cx="6" cy="3.5" r="2.8" fill="#d8a070" stroke="#6a3a10" stroke-width="0.9"/>
  <path d="M1,12 C1,8 3,7 6,7 C9,7 10,8 10,10 L8,12 Z" fill="#3a7ad8" stroke="#1a4a98" stroke-width="0.8"/>
  <circle cx="10.5" cy="8" r="2.8" fill="#f0d090" stroke="#a07830" stroke-width="0.9"/>
  <path d="M5.5,15.5 C5.5,12 7.5,11 10.5,11 C13.5,11 15.5,12 15.5,15.5 Z" fill="#60c040" stroke="#288018" stroke-width="0.8"/>
</g>
<!-- chevrons -->
<use href="#chev" x="602.5" y="181"/>
<use href="#chev" x="602.5" y="403"/>
<!-- size grip -->
<g fill="#3a64b0">
  <rect x="1001" y="705" width="2" height="2"/>
  <rect x="997" y="709" width="2" height="2"/><rect x="1001" y="709" width="2" height="2"/>
  <rect x="993" y="713" width="2" height="2"/><rect x="997" y="713" width="2" height="2"/><rect x="1001" y="713" width="2" height="2"/>
</g>
</svg>

</body></html>
